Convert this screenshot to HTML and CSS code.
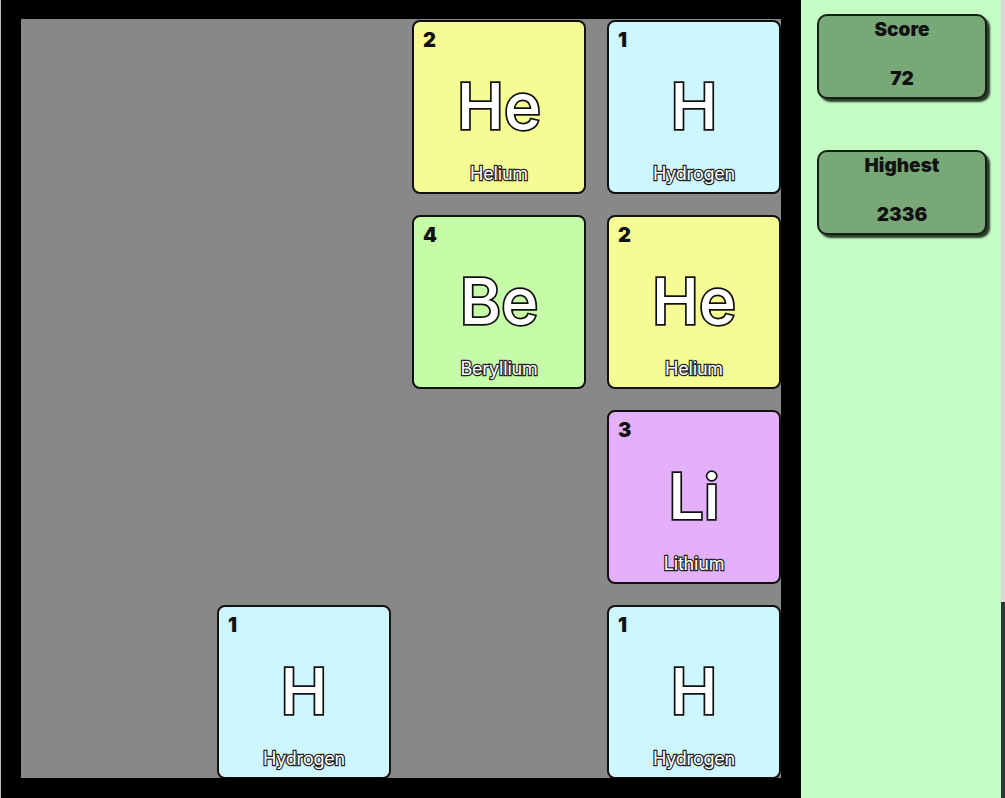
FILE: index.html
```html
<!DOCTYPE html>
<html>
<head>
<meta charset="utf-8">
<link rel="stylesheet" href="styles.css">
</head>
<body>
<div class="page">
  <div class="board">
    <div class="grid">
      <div class="tile he r1 c3"><span class="num">2</span><span class="sym">He</span><span class="name">Helium</span></div>
      <div class="tile h r1 c4"><span class="num">1</span><span class="sym">H</span><span class="name">Hydrogen</span></div>
      <div class="tile be r2 c3"><span class="num">4</span><span class="sym">Be</span><span class="name">Beryllium</span></div>
      <div class="tile he r2 c4"><span class="num">2</span><span class="sym">He</span><span class="name">Helium</span></div>
      <div class="tile li r3 c4"><span class="num">3</span><span class="sym">Li</span><span class="name">Lithium</span></div>
      <div class="tile h r4 c2"><span class="num">1</span><span class="sym">H</span><span class="name">Hydrogen</span></div>
      <div class="tile h r4 c4"><span class="num">1</span><span class="sym">H</span><span class="name">Hydrogen</span></div>
    </div>
  </div>
  <div class="side">
    <div class="card score"><div class="label">Score</div><div class="value">72</div></div>
    <div class="card highest"><div class="label">Highest</div><div class="value">2336</div></div>
  </div>
  <div class="strip"><div class="strip-top"></div><div class="strip-bottom"></div></div>
</div>
</body>
</html>
```
FILE: styles.css
```css
html, body {
  margin: 0;
  padding: 0;
  background: #000;
  overflow: hidden;
}
.page {
  display: flex;
  width: 1005px;
  height: 798px;
  font-family: Inter, "Liberation Sans", sans-serif;
}
.board {
  width: 801px;
  height: 798px;
  background: #000;
  border-left: 1px solid #bbb;
  box-sizing: border-box;
  padding: 19px 0 0 20px;
}
.grid {
  width: 760px;
  height: 759px;
  background: #888888;
  display: grid;
  grid-template-columns: repeat(4, 175px);
  grid-template-rows: repeat(4, 174px);
  column-gap: 20px;
  row-gap: 21px;
  padding-top: 1px;
  box-sizing: border-box;
  overflow: hidden;
}
.r1 { grid-row: 1; }
.r2 { grid-row: 2; }
.r3 { grid-row: 3; }
.r4 { grid-row: 4; }
.c1 { grid-column: 1; }
.c2 { grid-column: 2; }
.c3 { grid-column: 3; }
.c4 { grid-column: 4; }
.tile {
  box-sizing: border-box;
  border: 2px solid #111;
  border-radius: 8px;
  margin-left: 1px;
  display: flex;
  flex-direction: column;
  align-items: center;
}
.he { background: #f7fb94; }
.h { background: #cdf6fd; }
.be { background: #c6fca8; }
.li { background: #e5b0fb; }
.num {
  align-self: flex-start;
  margin: 7px 0 0 9px;
  font-size: 20px;
  font-weight: 900;
  line-height: 22px;
  color: #111;
}
.sym {
  margin-top: 17px;
  font-size: 63px;
  font-weight: 500;
  line-height: 76px;
  color: #fff;
  -webkit-text-stroke: 3.5px #111;
  paint-order: stroke fill;
}
.name {
  margin-top: 20px;
  font-size: 18px;
  line-height: 20px;
  color: #fff;
  -webkit-text-stroke: 2.4px #222;
  paint-order: stroke fill;
  letter-spacing: -0.2px;
}
.side {
  width: 200px;
  height: 798px;
  background: #c4fcc4;
  display: flex;
  flex-direction: column;
  align-items: flex-start;
  padding: 14px 0 0 16px;
  box-sizing: border-box;
  gap: 51px;
}
.card {
  width: 170px;
  height: 85px;
  box-sizing: border-box;
  background: #78a878;
  border: 2px solid #152015;
  border-radius: 10px;
  box-shadow: 3px 3px 2px #2a3a2a;
  display: flex;
  flex-direction: column;
  align-items: center;
  color: #111;
  font-weight: 900;
  font-size: 19px;
}
.label {
  margin-top: 2px;
  line-height: 24px;
}
.value {
  margin-top: 25px;
  line-height: 24px;
}
.strip {
  width: 4px;
  height: 798px;
  display: flex;
  flex-direction: column;
}
.strip-top {
  height: 602px;
  background: #d8d8d8;
}
.strip-bottom {
  flex: 1;
  background: #2c3838;
}
```
